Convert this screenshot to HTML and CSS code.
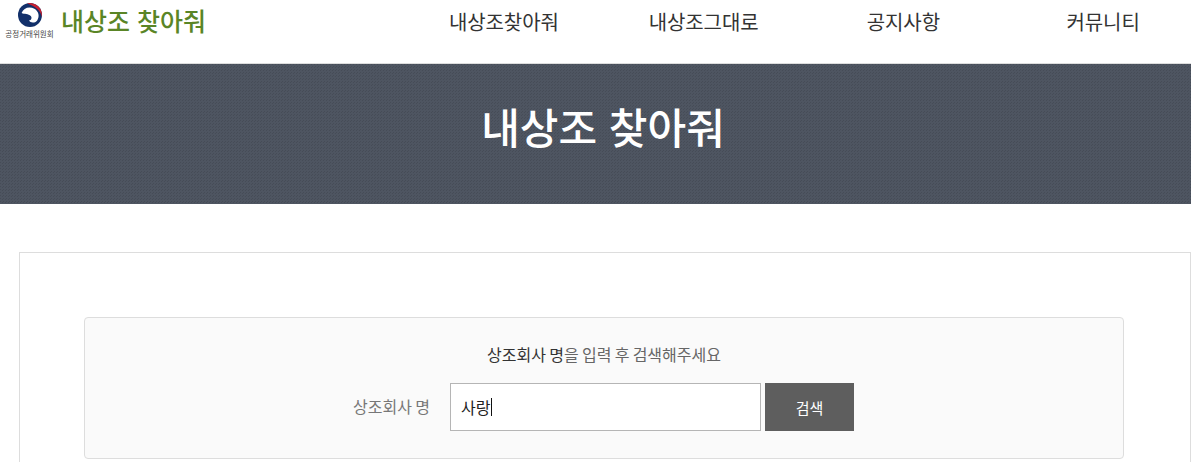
FILE: index.html
```html
<!DOCTYPE html>
<html lang="ko">
<head>
    <meta charset="UTF-8">
    <title>내상조 찾아줘</title>
    <link rel="stylesheet" href="styles.css">
</head>
<body>
    <header class="site-header">
        <a class="logo" href="#">
            <span class="logo-mark">
                <svg class="logo-icon" width="26" height="26" viewBox="0 0 26 26">
                    <circle cx="13" cy="13" r="12" fill="#12306a"/>
                    <path d="M10 1.4A12 12 0 0 1 24.8 15C24.4 9.4 18 3.4 10 1.4Z" fill="#c9202f"/>
                    <path d="M4.6 11C6.4 5.8 12.4 4 17.4 6.8C21.8 9.4 22.8 14.6 20.2 18.4C17.8 21.4 13.4 21.2 12 18.6C14.4 18.2 15.2 15.6 13.8 14C11.4 11.4 7.4 12.6 4.6 11Z" fill="#fff"/>
                </svg>
                <span class="logo-org">공정거래위원회</span>
            </span>
            <span class="logo-title">내상조 찾아줘</span>
        </a>
        <nav class="main-nav">
            <a href="#">내상조찾아줘</a>
            <a href="#">내상조그대로</a>
            <a href="#">공지사항</a>
            <a href="#">커뮤니티</a>
        </nav>
    </header>

    <section class="banner">
        <h1>내상조 찾아줘</h1>
    </section>

    <main class="content">
        <div class="search-box">
            <p class="search-hint"><strong>상조회사 명</strong>을 입력 후 검색해주세요</p>
            <form class="search-form">
                <label for="companyName">상조회사 명</label>
                <div class="fake-input" id="companyName">사랑<span class="caret"></span></div>
                <button type="button" class="btn-search">검색</button>
            </form>
        </div>
    </main>
</body>
</html>
```

FILE: styles.css
```css
* {
    box-sizing: border-box;
}

html, body {
    height: 100%;
    overflow: hidden;
}

body {
    margin: 0;
    background: #fff;
    color: #333;
    font-family: "Noto Sans CJK KR", "Noto Sans", sans-serif;
}

a {
    color: inherit;
    text-decoration: none;
}

.site-header {
    display: flex;
    height: 64px;
    border-bottom: 1px solid #ddd;
    width: 1203px;
}

.logo {
    display: flex;
    align-items: flex-start;
    width: 403px;
    padding: 2px 0 0 5px;
}

.logo-mark {
    display: flex;
    flex-direction: column;
    align-items: center;
    width: 49px;
}

.logo-icon {
    display: block;
}

.logo-org {
    font-size: 7.5px;
    line-height: 11px;
    color: #444;
    white-space: nowrap;
}

.logo-title {
    margin: 0 0 0 7px;
    font-size: 25px;
    line-height: 37px;
    font-weight: 500;
    color: #5a8526;
    white-space: nowrap;
}

.main-nav {
    display: flex;
    width: 800px;
    padding-left: 1px;
}

.main-nav a {
    flex: 1;
    padding-top: 8px;
    text-align: center;
    font-size: 20px;
    line-height: 27px;
    font-weight: 400;
    color: #333;
    letter-spacing: -0.1px;
}

.banner {
    height: 140px;
    background-color: #4e5561;
    background-image: linear-gradient(45deg, rgba(0,0,0,0.1) 25%, transparent 25%, transparent 75%, rgba(0,0,0,0.1) 75%);
    background-size: 3px 3px;
}

.banner h1 {
    margin: 0;
    padding: 32px 0 0 15px;
    text-align: center;
    font-size: 42px;
    line-height: 60px;
    font-weight: 500;
    color: #fff;
}

.content {
    margin: 48px 0 0 19px;
    height: 300px;
    border: 1px solid #ddd;
    padding: 64px 66px 0 64px;
}

.search-box {
    height: 142px;
    border: 1px solid #ddd;
    border-radius: 4px;
    background: #fafafa;
    padding: 24px 0 0;
}

.search-hint {
    margin: 0 0 17px;
    text-align: center;
    font-size: 16px;
    line-height: 24px;
    word-spacing: -1.2px;
    color: #666;
}

.search-hint strong {
    font-weight: 400;
    color: #333;
}

.search-form {
    display: flex;
    align-items: stretch;
    height: 48px;
    padding-left: 248px;
}

.search-form label {
    width: 97px;
    line-height: 46px;
    font-size: 16px;
    word-spacing: -1.2px;
    color: #777;
    text-align: right;
    margin-right: 20px;
}

.fake-input {
    display: flex;
    align-items: center;
    width: 311px;
    border: 1px solid #b5b5b5;
    background: #fff;
    padding-left: 10px;
    font-size: 16px;
    color: #222;
}

.caret {
    width: 1px;
    height: 18px;
    margin-left: 1px;
    background: #111;
}

.btn-search {
    width: 89px;
    margin-left: 4px;
    border: none;
    background: #5e5e5e;
    color: #fff;
    font-family: inherit;
    font-size: 15px;
    cursor: pointer;
}
```
